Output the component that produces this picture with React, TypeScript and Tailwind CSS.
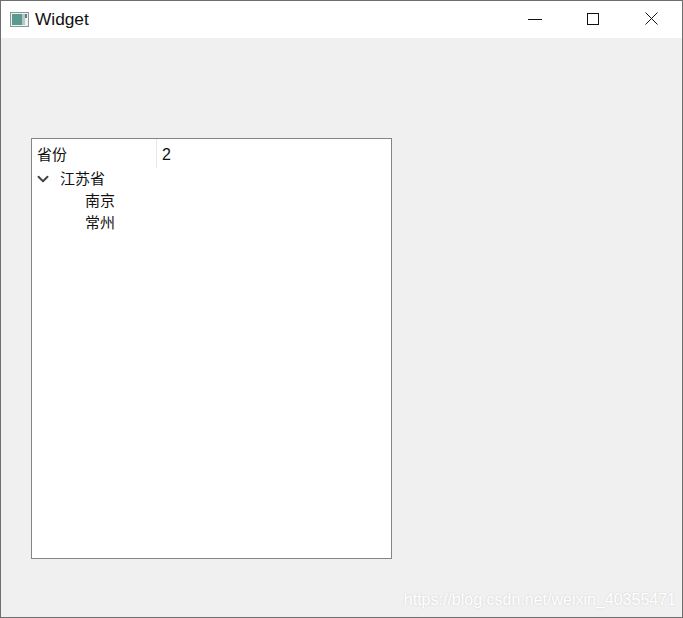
import { ChevronDown } from 'lucide-react';

const CJK = 'font-["Liberation_Sans","Noto_Sans_CJK_SC",sans-serif]';

function AppIcon() {
  return (
    <svg width="19" height="15" viewBox="0 0 19 15" className="shrink-0">
      <rect x="0.5" y="0.5" width="18" height="14" fill="#eef2f2" stroke="#8a9698" />
      <rect x="2" y="2" width="10" height="11" fill="#5a9a90" />
      <rect x="12" y="2" width="3" height="11" fill="#b5c8ca" />
      <rect x="15" y="2" width="2" height="4" fill="#6a7c80" />
    </svg>
  );
}

function TitleBar() {
  return (
    <div className="h-[37px] bg-white flex items-center justify-between shrink-0">
      <div className="flex items-center gap-[6px] pl-[9px]">
        <AppIcon />
        <span className="text-[17.3px] text-[#111]">Widget</span>
      </div>
      <div className="flex items-center pb-[2px]">
        {/* minimize */}
        <svg width="14" height="12" viewBox="0 0 14 12" className="mr-[45px]">
          <path d="M0 6.5H14" stroke="#111" strokeWidth="1" />
        </svg>
        {/* maximize */}
        <svg width="12" height="12" viewBox="0 0 12 12" className="mr-[46px]">
          <rect x="0.5" y="0.5" width="11" height="11" fill="none" stroke="#111" />
        </svg>
        {/* close */}
        <svg width="13" height="13" viewBox="0 0 13 13" className="mr-[24px]">
          <path d="M0.5 0.5L12.5 12.5M12.5 0.5L0.5 12.5" stroke="#111" strokeWidth="1" />
        </svg>
      </div>
    </div>
  );
}

function Tree() {
  return (
    <div className="w-[361px] h-[421px] bg-white border border-[#858585] text-[15px] leading-[22px] text-[#111]">
      <div className="flex h-[29px]">
        <div className="w-[125px] pl-[5px] pt-[2px] flex items-center border-r border-[#e8e8e8]">省份</div>
        <div className="pl-[5px] pt-[2px] flex items-center text-[16px]">2</div>
      </div>
      <div className="flex items-center h-[22px] pl-[2px]">
        <ChevronDown size={18} strokeWidth={2.6} className="text-[#444] mr-[8px]" />
        <span>江苏省</span>
      </div>
      <div className="pl-[53px]">南京</div>
      <div className="pl-[53px]">常州</div>
    </div>
  );
}

export default function App() {
  return (
    <div className={`relative w-[683px] h-[618px] flex flex-col bg-[#f0f0f0] border border-[#6e6e6e] ${CJK}`}>
      <TitleBar />
      <div className="pt-[100px] pl-[30px]">
        <Tree />
      </div>
      <span className="absolute right-[6px] bottom-[5px] text-[16px] text-white [text-shadow:0_0_2px_#cccccc]">
        https://blog.csdn.net/weixin_40355471
      </span>
    </div>
  );
}
